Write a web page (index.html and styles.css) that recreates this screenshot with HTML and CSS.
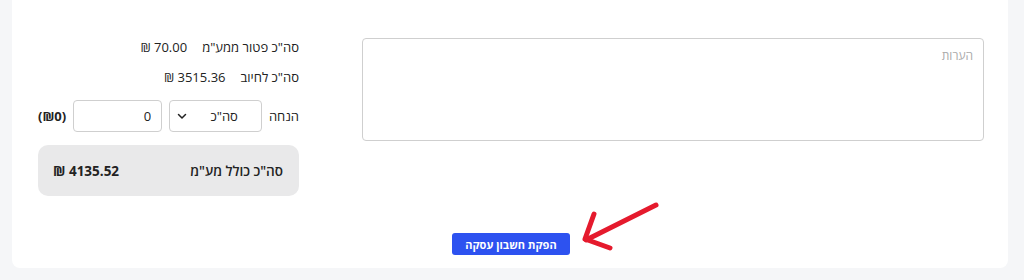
FILE: index.html
```html
<!DOCTYPE html>
<html lang="he" dir="rtl">
<head>
  <meta charset="UTF-8" />
  <title>חשבון עסקה</title>
  <link rel="stylesheet" href="styles.css">
</head>
<body>
  <div class="card">
    <div class="main">
      <textarea class="notes" placeholder="הערות"></textarea>

      <div class="totals">
        <div class="row">
          <span class="label">סה"כ פטור ממע"מ</span>
          <span class="value">70.00 ₪</span>
        </div>
        <div class="row">
          <span class="label">סה"כ לחיוב</span>
          <span class="value">3515.36 ₪</span>
        </div>
        <div class="row discount">
          <span class="label">הנחה</span>
          <div class="select">
            <span>סה"כ</span>
            <svg width="10" height="7" viewBox="0 0 10 7"><path d="M1.5 1.5 L5 5 L8.5 1.5" fill="none" stroke="#222" stroke-width="1.5" stroke-linecap="round" stroke-linejoin="round"/></svg>
          </div>
          <input class="amount" type="text" value="0" />
          <span class="calc">(₪0)</span>
        </div>
        <div class="grand">
          <span>סה"כ כולל מע"מ</span>
          <span class="grand-value">4135.52 ₪</span>
        </div>
      </div>
    </div>

    <div class="actions">
      <button class="btn">הפקת חשבון עסקה</button>
    </div>

    <svg class="arrow" width="90" height="60" viewBox="0 0 90 60">
      <g fill="none" stroke="#e51a2d" stroke-width="5" stroke-linecap="round" stroke-linejoin="round">
        <path d="M82 9 L12 44"/>
        <path d="M20 18 L11 43 L36 52"/>
      </g>
    </svg>
  </div>
</body>
</html>
```

FILE: styles.css
```css
body {
  margin: 0;
  background: #f5f6f8;
  font-family: "Open Sans", "DejaVu Sans", sans-serif;
  color: #222;
}

.card {
  position: relative;
  margin: 0 16px 0 12px;
  width: 996px;
  height: 268px;
  box-sizing: border-box;
  background: #fff;
  border-radius: 0 0 8px 8px;
  padding: 38px 24px 0 26px;
}

.main {
  display: flex;
  align-items: flex-start;
  gap: 63px;
}

.notes {
  flex: 1;
  height: 103px;
  box-sizing: border-box;
  border: 1px solid #cfcfcf;
  border-radius: 4px;
  padding: 8px 10px;
  font-family: inherit;
  font-size: 12px;
  resize: none;
  margin: 0;
}

.notes::placeholder {
  color: #aaa;
}

.totals {
  width: 261px;
  display: flex;
  flex-direction: column;
  font-size: 13px;
}

.row {
  display: flex;
  align-items: center;
  gap: 15px;
  height: 18px;
}

.row + .row {
  margin-top: 12px;
}

.discount {
  height: 32px;
  gap: 7px;
  margin-top: 14px !important;
}

.select {
  width: 93px;
  height: 32px;
  box-sizing: border-box;
  border: 1px solid #cfcfcf;
  border-radius: 4px;
  display: flex;
  align-items: center;
  justify-content: space-between;
  padding: 0 23px 0 7px;
}

.amount {
  width: 89px;
  height: 32px;
  box-sizing: border-box;
  border: 1px solid #cfcfcf;
  border-radius: 4px;
  padding: 0 10px;
  font-family: inherit;
  font-size: 13px;
  color: #222;
  margin: 0;
}

.calc {
  font-weight: bold;
  margin-right: 0;
}

.grand {
  margin-top: 13px;
  height: 51px;
  background: #e9e9ea;
  border-radius: 10px;
  display: flex;
  align-items: center;
  justify-content: space-between;
  padding: 0 16px 0 15px;
  font-size: 13.5px;
  font-weight: 600;
}

.grand-value {
  font-weight: bold;
}

.actions {
  display: flex;
  justify-content: center;
  margin-top: 37px;
}

.btn {
  width: 118px;
  height: 22px;
  border: none;
  border-radius: 3px;
  background: #2d52f0;
  color: #fff;
  font-family: inherit;
  font-size: 11px;
  font-weight: bold;
  padding: 0;
}

.arrow {
  position: absolute;
  left: 562px;
  top: 196px;
}
```
